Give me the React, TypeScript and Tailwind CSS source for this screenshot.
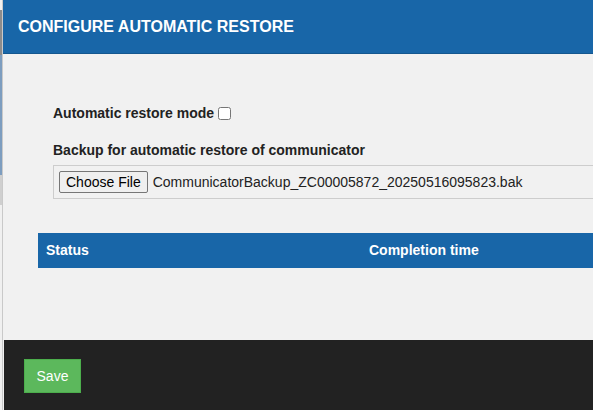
export default function App() {
  return (
    <div className="flex h-[410px] w-[593px] overflow-hidden bg-[#f1f1f1] font-['Liberation_Sans',Arial,sans-serif]">
      {/* page behind the dialog */}
      <div className="flex w-[2px] shrink-0 flex-col">
        <div className="h-[10px] bg-[#f0f0f0]" />
        <div className="h-[45px] bg-[#8c8c8c]" />
        <div className="h-[120px] bg-[#7d9dbf]" />
        <div className="h-[30px] bg-[#cfcfcf]" />
        <div className="flex-1 bg-[#f0f0f0]" />
      </div>

      <div className="flex min-w-0 flex-1 flex-col border-l border-[#c9c9c9]">
        <div className="flex h-[54px] shrink-0 items-center border-b border-[#14578f] bg-[#1866a8] pl-[15px]">
          <h1 className="text-[16px] font-bold text-white">CONFIGURE AUTOMATIC RESTORE</h1>
        </div>

        <div className="flex-1 overflow-hidden bg-[#f1f1f1] pt-[49px]">
          <div className="pl-[50px]">
            <label className="flex items-center text-[14px] font-bold text-[#222]">
              Automatic restore mode
              <input type="checkbox" className="ml-[4px] h-[13px] w-[13px]" />
            </label>
            <p className="mt-[16px] text-[14px] font-bold text-[#222]">Backup for automatic restore of communicator</p>
            <div className="mt-[4px] flex h-[34px] w-[620px] items-center border border-[#cdcdcd] pl-[5px] text-[14px] text-[#222]">
              <button className="h-[22px] rounded-[2px] border border-[#767676] bg-[#efefef] px-[6px] text-[14px] text-black">
                Choose File
              </button>
              <span className="ml-[5px] whitespace-nowrap">CommunicatorBackup_ZC00005872_20250516095823.bak</span>
            </div>
          </div>

          <div className="ml-[35px] mt-[34px] flex h-[35px] w-[620px] items-center bg-[#1866a8] text-[14px] font-bold text-white">
            <span className="w-[331px] pl-[8px]">Status</span>
            <span>Completion time</span>
          </div>
        </div>

        <div className="ml-[1px] flex h-[70px] shrink-0 items-center bg-[#222222] pl-[20px] pt-[2px]">
          <button className="h-[34px] w-[57px] border border-[#4cae4c] bg-[#5cb85c] text-[14px] text-white">Save</button>
        </div>
      </div>
    </div>
  );
}
